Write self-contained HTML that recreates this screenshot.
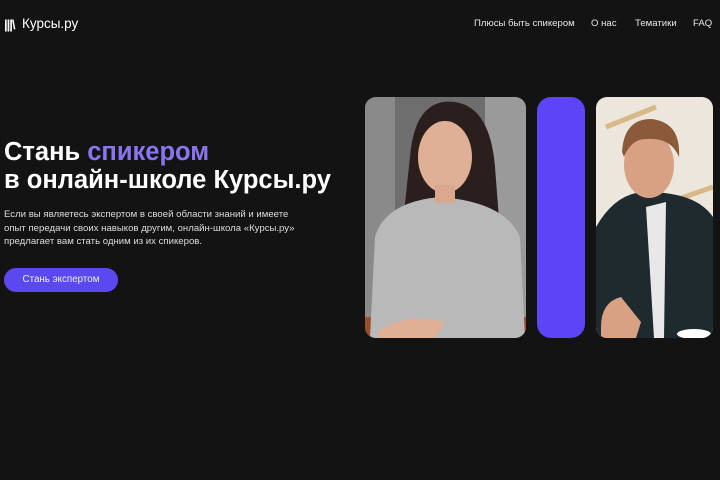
<!DOCTYPE html>
<html><head><meta charset="utf-8"><style>
body{margin:0;width:720px;height:480px;background:#141314;font-family:"Liberation Sans",sans-serif;color:#fff;position:relative;overflow:hidden}
.a{position:absolute}
.nav{top:18px;font-size:9.6px;color:#e6e6e6;white-space:nowrap}
</style></head><body>
<div class="a" style="left:4px;top:17px;font-size:13px;font-weight:bold;">
<span style="letter-spacing:-1px">|||\</span></div>
<div class="a" style="left:22px;top:16px;font-size:13.5px;">Курсы.ру</div>
<div class="a nav" style="left:474px">Плюсы быть спикером</div>
<div class="a nav" style="left:591px">О нас</div>
<div class="a nav" style="left:635px">Тематики</div>
<div class="a nav" style="left:693px">FAQ</div>
<div class="a" style="left:4px;top:138px;font-size:25.5px;font-weight:bold;line-height:28px;white-space:nowrap">Стань <span style="color:#8b74f0">спикером</span><br>в онлайн-школе Курсы.ру</div>
<div class="a" style="left:4px;top:208px;font-size:9.6px;line-height:13.5px;color:#ddd;white-space:nowrap">Если вы являетесь экспертом в своей области знаний и имеете<br>опыт передачи своих навыков другим, онлайн-школа «Курсы.ру»<br>предлагает вам стать одним из их спикеров.</div>
<div class="a" style="left:4px;top:268px;width:114px;height:24px;border-radius:12px;background:#5c48f0;font-size:9.8px;line-height:24px;text-align:center;color:#eee">Стань экспертом</div>
<svg class="a" style="left:365px;top:97px" width="161" height="241"><defs><clipPath id="c1"><rect width="161" height="241" rx="11"/></clipPath></defs><g clip-path="url(#c1)">
<rect width="161" height="241" fill="#6e6e6e"/><rect x="0" y="0" width="30" height="241" fill="#8a8a8a"/><rect x="120" y="0" width="41" height="241" fill="#9a9a9a"/>
<rect x="0" y="220" width="161" height="21" fill="#9a4e2c"/>
<path d="M45 60 Q50 0 90 5 Q125 10 130 70 L140 200 L30 200 Z" fill="#2a1f1c"/>
<path d="M5 241 L10 140 Q20 105 75 100 Q140 105 155 140 L160 241 Z" fill="#b9b9b9"/>
<ellipse cx="80" cy="60" rx="27" ry="36" fill="#e0b096"/>
<rect x="70" y="88" width="20" height="18" fill="#d9a88e"/>
<path d="M12 235 Q40 215 80 225 L70 241 L15 241Z" fill="#e0b096"/>
</g></svg>
<div class="a" style="left:537px;top:97px;width:48px;height:241px;border-radius:14px;background:#5b45f6"></div>
<svg class="a" style="left:596px;top:97px" width="117" height="241"><defs><clipPath id="c2"><rect width="117" height="241" rx="11"/></clipPath></defs><g clip-path="url(#c2)">
<rect width="117" height="241" fill="#ece6dc"/><path d="M10 30 L60 10 M60 110 L117 90" stroke="#d8b887" stroke-width="5"/>
<path d="M0 241 L0 130 Q20 95 50 95 Q100 95 117 120 L117 241Z" fill="#1e2a2e"/>
<path d="M50 110 L70 105 L68 241 L58 241Z" fill="#e8e8e8"/>
<ellipse cx="53" cy="68" rx="25" ry="33" fill="#d9a184"/>
<path d="M26 55 Q28 22 55 22 Q85 25 83 60 Q75 40 50 42 Q35 42 28 60Z" fill="#8a5a3a"/>
<path d="M5 230 Q5 205 25 200 L45 225 L40 241 L5 241Z" fill="#d9a184"/>
<ellipse cx="98" cy="237" rx="17" ry="5" fill="#fff"/>
</g></svg>
</body></html>
